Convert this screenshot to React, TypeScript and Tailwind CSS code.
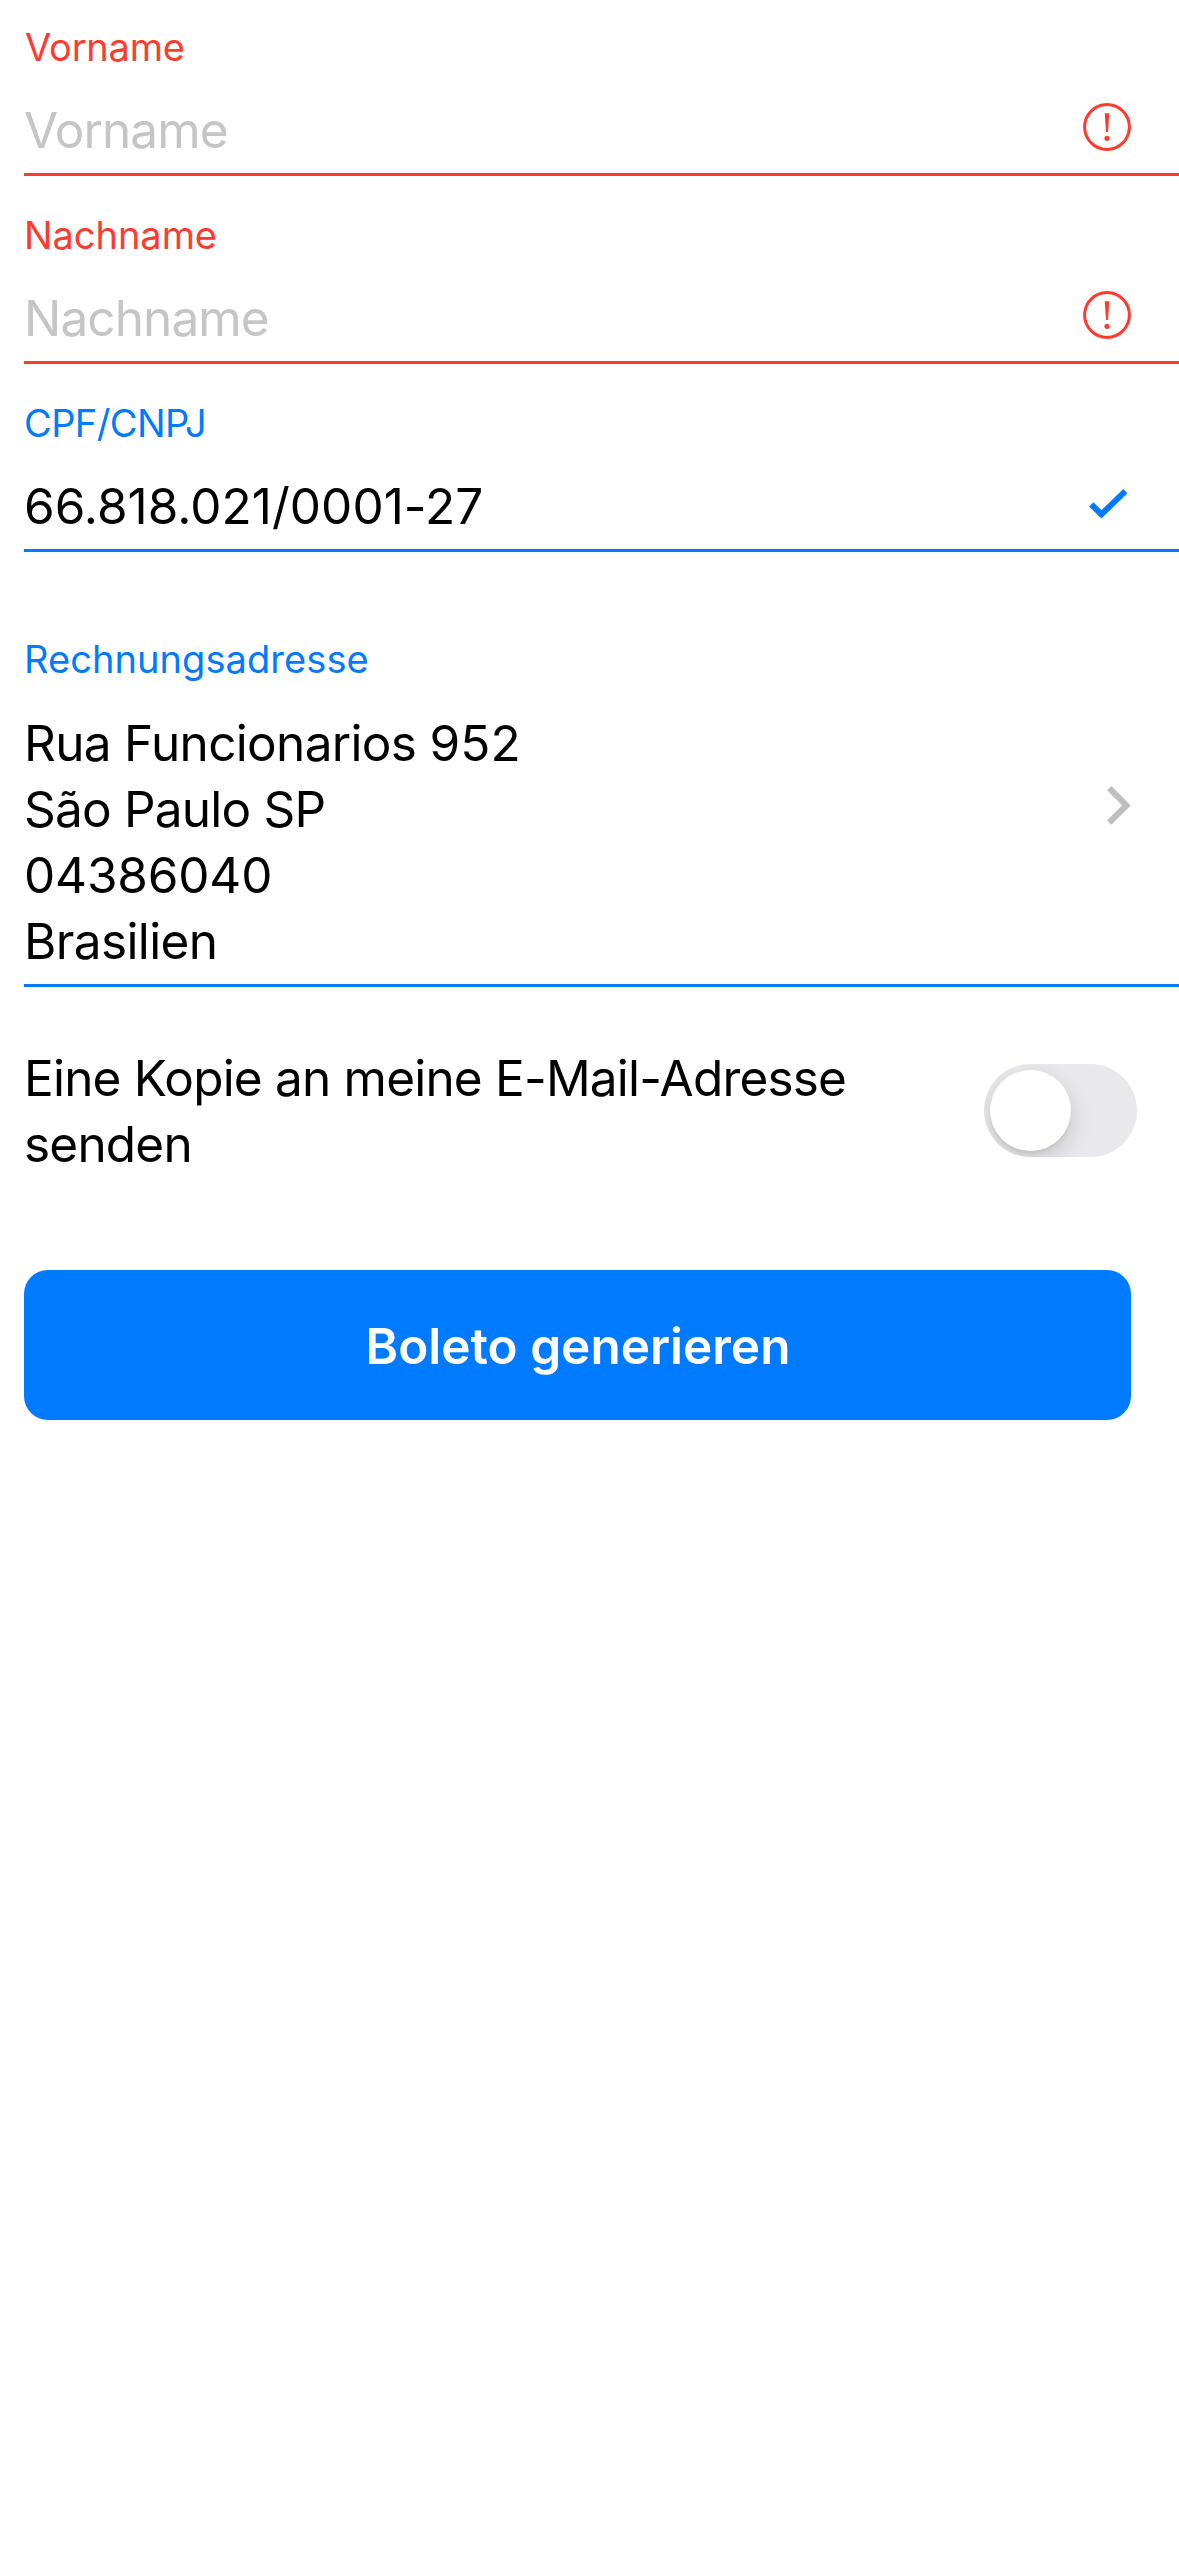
import type { ReactNode } from "react";

function ErrorIcon() {
  return (
    <svg className="size-12" viewBox="0 0 48 48" fill="none">
      <circle cx="24" cy="24" r="22.4" stroke="#ff3b30" strokeWidth="3" />
      <path d="M21.7 10.3H26.3L25 29H23Z" fill="#ff3b30" />
      <circle cx="24" cy="35.3" r="2.6" fill="#ff3b30" />
    </svg>
  );
}

function CheckIcon() {
  return (
    <svg className="h-[30px] w-[39px]" viewBox="0 0 39 30" fill="none">
      <path d="M2.3 15.4L12.4 25.4L36.3 2.2" stroke="#007aff" strokeWidth="6" />
    </svg>
  );
}

function ChevronIcon() {
  return (
    <svg className="h-[39px] w-6" viewBox="0 0 24 39" fill="none">
      <path d="M2.2 2.2L19.4 19.4L2.2 36.6" stroke="#bfbfbf" strokeWidth="6.1" />
    </svg>
  );
}

type FieldProps = {
  label: string;
  labelClass: string;
  borderClass: string;
  icon: ReactNode;
  iconClass: string;
  children: ReactNode;
};

function Field({ label, labelClass, borderClass, icon, iconClass, children }: FieldProps) {
  return (
    <div className={`ml-6 border-b-[3px] pt-[23px] ${borderClass}`}>
      <div className={`text-[38px] leading-[48px] ${labelClass}`}>{label}</div>
      <div className="mt-[26px] flex items-start justify-between pb-[10px]">
        <div className="text-[49.5px] leading-[66px]">{children}</div>
        <div className={iconClass}>{icon}</div>
      </div>
    </div>
  );
}

export default function App() {
  return (
    <main className="flex min-h-[2556px] w-full flex-col bg-white font-['Inter',sans-serif] text-black">
      <div className="flex flex-col gap-3">
        <Field
          label="Vorname"
          labelClass="tracking-[-0.2px] text-[#ff3b30] pl-px"
          borderClass="border-[#ff3b30]"
          icon={<ErrorIcon />}
          iconClass="mt-[6px] mr-12"
        >
          <span className="tracking-[-0.9px] text-[#c5c5c7]">Vorname</span>
        </Field>
        <Field
          label="Nachname"
          labelClass="tracking-[-0.05px] text-[#ff3b30]"
          borderClass="border-[#ff3b30]"
          icon={<ErrorIcon />}
          iconClass="mt-[6px] mr-12"
        >
          <span className="tracking-[-0.9px] text-[#c5c5c7]">Nachname</span>
        </Field>
        <Field
          label="CPF/CNPJ"
          labelClass="tracking-[-0.6px] text-[#007aff]"
          borderClass="border-[#007aff]"
          icon={<CheckIcon />}
          iconClass="mt-4 mr-[51px]"
        >
          <span className="tracking-[0.03px]">66.818.021/0001-27</span>
        </Field>
      </div>

      <div className="mt-[60px]">
        <Field
          label="Rechnungsadresse"
          labelClass="tracking-[0.07px] text-[#007aff]"
          borderClass="border-[#007aff]"
          icon={<ChevronIcon />}
          iconClass="mt-[77px] mr-12"
        >
          <div className="pt-px">
            <p className="tracking-[-0.68px]">
              Rua Funcionarios <span className="tracking-[0.1px]">952</span>
            </p>
            <p className="tracking-[-0.8px]">São Paulo SP</p>
            <p className="tracking-[-0.16px]">04386040</p>
            <p className="tracking-[-0.62px]">Brasilien</p>
          </div>
        </Field>
      </div>

      <div className="mt-[58px] flex items-start justify-between pr-[42px] pl-6">
        <p className="w-[880px] text-[49.5px] leading-[66px] tracking-[-0.8px]">
          Eine Kopie an meine E-Mail-Adresse senden
        </p>
        <button
          role="switch"
          aria-checked="false"
          aria-label="Kopie senden"
          className="mt-[19px] h-[93px] w-[153px] overflow-hidden rounded-full bg-[#e9e9eb] p-[6px]"
        >
          <span className="block size-[81px] rounded-full bg-white shadow-[0_9px_24px_rgba(0,0,0,0.15),0_3px_3px_rgba(0,0,0,0.06)]" />
        </button>
      </div>

      <button className="mt-[93px] mr-12 ml-6 h-[150px] rounded-[24px] bg-[#007aff] pt-0.5 pl-px text-[49.5px] leading-[66px] font-semibold text-white">
        Boleto generieren
      </button>
    </main>
  );
}
